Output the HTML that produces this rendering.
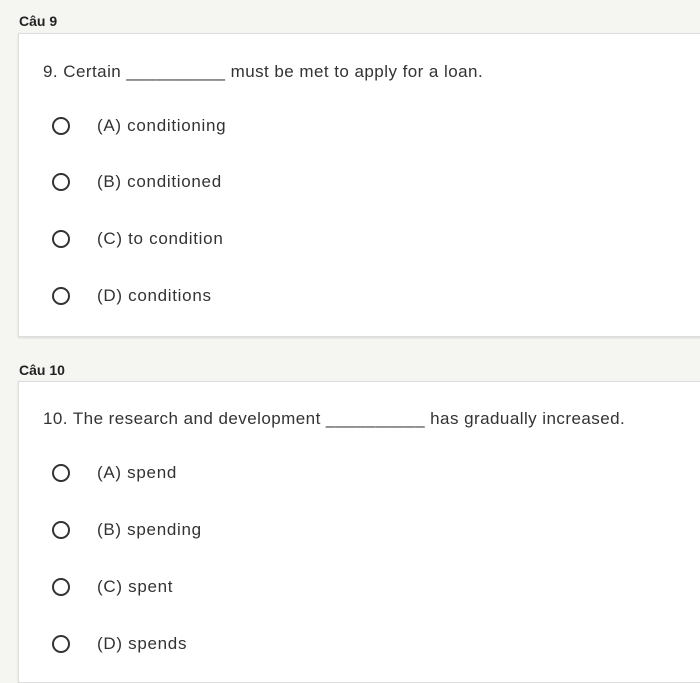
<!DOCTYPE html>
<html><head><style>
body{margin:0;width:700px;height:666px;overflow:hidden;background:#f5f5f2;font-family:"Liberation Sans",Arial,sans-serif;color:#333;position:relative}
.lbl{position:absolute;left:19px;font-weight:bold;font-size:14px;color:#222}
.card{position:absolute;left:18px;width:700px;background:#fff;border:1px solid #ddd;box-shadow:0 1px 2px rgba(0,0,0,.12)}
.q{position:absolute;left:24px;font-size:17px;color:#333;white-space:nowrap;letter-spacing:.45px}
.o{position:absolute;left:78px;font-size:17px;color:#333;white-space:nowrap;letter-spacing:.7px}
.r{position:absolute;left:33px;width:14px;height:14px;border:2px solid #333;border-radius:50%}
</style></head><body>
<div class="lbl" style="top:13px">Câu 9</div>
<div class="card" style="top:33px;height:302px">
<div class="q" style="top:28px">9. Certain __________ must be met to apply for a loan.</div>
<div class="r" style="top:83px"></div><div class="o" style="top:82px">(A) conditioning</div>
<div class="r" style="top:139px"></div><div class="o" style="top:138px">(B) conditioned</div>
<div class="r" style="top:196px"></div><div class="o" style="top:195px">(C) to condition</div>
<div class="r" style="top:253px"></div><div class="o" style="top:252px">(D) conditions</div>
</div>
<div class="lbl" style="top:362px">Câu 10</div>
<div class="card" style="top:381px;height:300px">
<div class="q" style="top:27px">10. The research and development __________ has gradually increased.</div>
<div class="r" style="top:82px"></div><div class="o" style="top:81px">(A) spend</div>
<div class="r" style="top:139px"></div><div class="o" style="top:138px">(B) spending</div>
<div class="r" style="top:196px"></div><div class="o" style="top:195px">(C) spent</div>
<div class="r" style="top:253px"></div><div class="o" style="top:252px">(D) spends</div>
</div>
</body></html>
